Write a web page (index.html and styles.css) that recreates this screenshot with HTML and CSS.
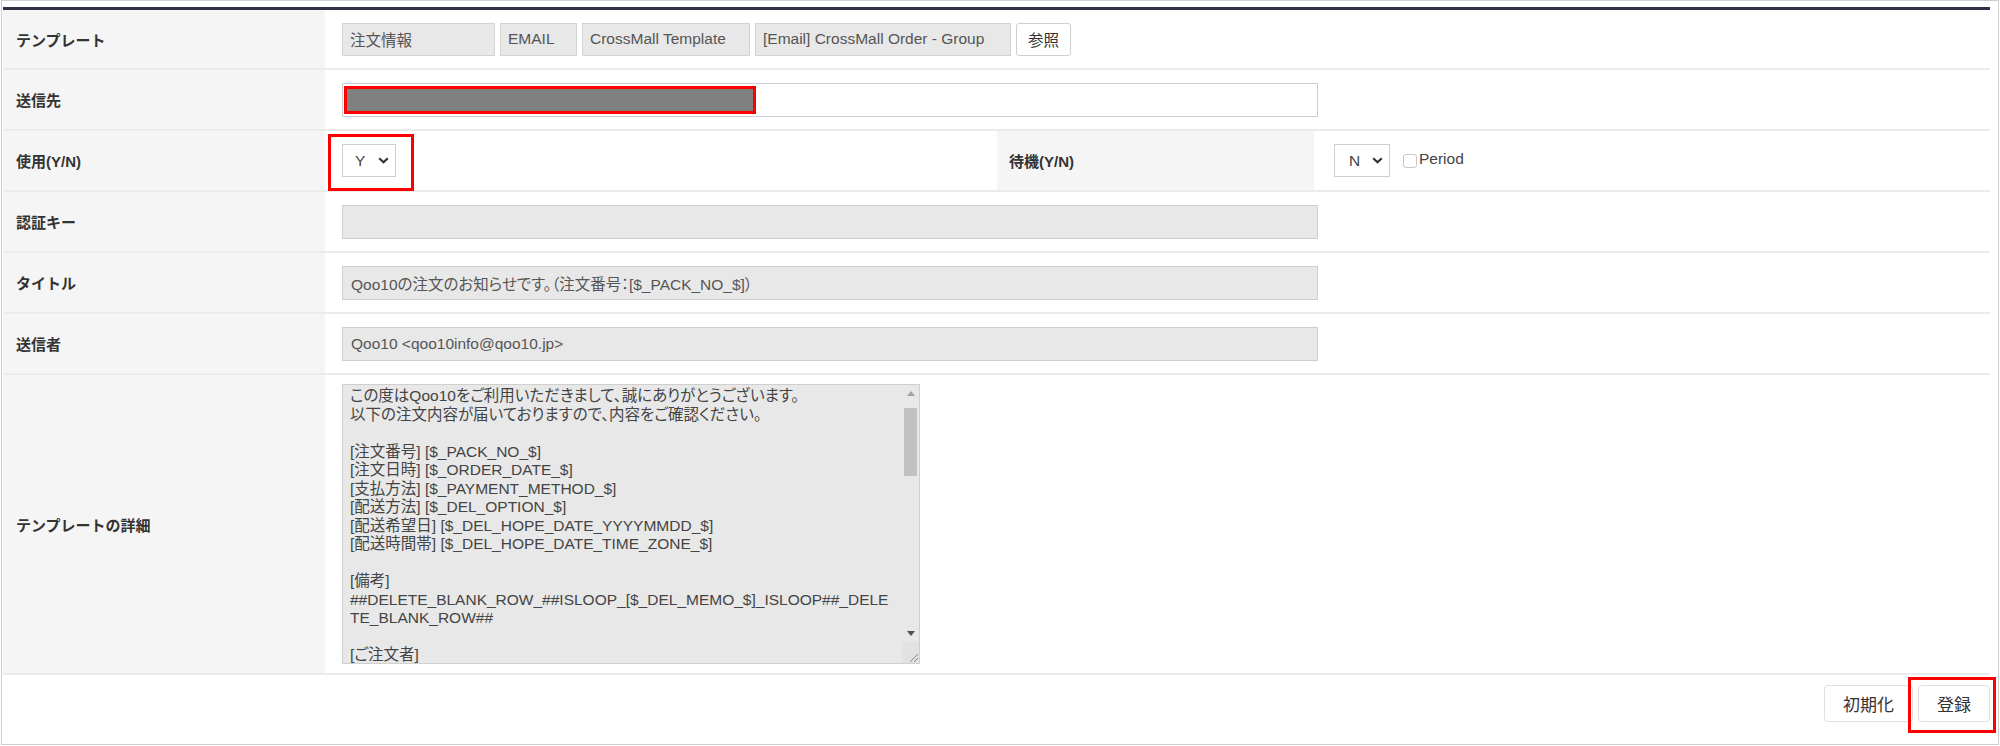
FILE: index.html
```html
<!DOCTYPE html>
<html lang="ja">
<head>
    <meta charset="UTF-8">
    <meta name="viewport" content="width=device-width, initial-scale=1.0">
    <title>テンプレート設定</title>
    <link rel="stylesheet" href="styles.css">
</head>
<body>
    <div class="panel">
        <div class="form">
            <div class="cell label row-first">テンプレート</div>
            <div class="cell value span3 row-first">
                <span class="chip chip-type">注文情報</span>
                <span class="chip chip-kind">EMAIL</span>
                <span class="chip chip-group">CrossMall Template</span>
                <span class="chip chip-name">[Email] CrossMall Order - Group</span>
                <button class="btn-ref" type="button">参照</button>
            </div>

            <div class="cell label">送信先</div>
            <div class="cell value span3">
                <div class="field field-white">
                    <span class="redacted"></span>
                </div>
            </div>

            <div class="cell label">使用(Y/N)</div>
            <div class="cell value">
                <div class="select marked">
                    <span class="select-text">Y</span>
                    <svg class="chev" width="11" height="7" viewBox="0 0 11 7"><polyline points="1.2,1.2 5.5,5.3 9.8,1.2" fill="none" stroke="#333" stroke-width="2.2"/></svg>
                </div>
            </div>
            <div class="cell label label-mid">待機(Y/N)</div>
            <div class="cell value value-last">
                <div class="select select-n">
                    <span class="select-text">N</span>
                    <svg class="chev" width="11" height="7" viewBox="0 0 11 7"><polyline points="1.2,1.2 5.5,5.3 9.8,1.2" fill="none" stroke="#333" stroke-width="2.2"/></svg>
                </div>
                <span class="chk"></span>
                <span class="chk-label">Period</span>
            </div>

            <div class="cell label">認証キー</div>
            <div class="cell value span3">
                <div class="field"></div>
            </div>

            <div class="cell label">タイトル</div>
            <div class="cell value span3">
                <div class="field">Qoo10の注文のお知らせです。（注文番号：[$_PACK_NO_$]）</div>
            </div>

            <div class="cell label">送信者</div>
            <div class="cell value span3">
                <div class="field">Qoo10 &lt;qoo10info@qoo10.jp&gt;</div>
            </div>

            <div class="cell label row-memo">テンプレートの詳細</div>
            <div class="cell value span3 row-memo">
                <div class="memo">
                    <textarea class="memo-text" readonly>この度はQoo10をご利用いただきまして、誠にありがとうございます。
以下の注文内容が届いておりますので、内容をご確認ください。

[注文番号] [$_PACK_NO_$]
[注文日時] [$_ORDER_DATE_$]
[支払方法] [$_PAYMENT_METHOD_$]
[配送方法] [$_DEL_OPTION_$]
[配送希望日] [$_DEL_HOPE_DATE_YYYYMMDD_$]
[配送時間帯] [$_DEL_HOPE_DATE_TIME_ZONE_$]

[備考]
##DELETE_BLANK_ROW_##ISLOOP_[$_DEL_MEMO_$]_ISLOOP##_DELETE_BLANK_ROW##

[ご注文者]</textarea>
                    <div class="vscroll">
                        <span class="vs-btn"><svg width="8" height="5" viewBox="0 0 8 5"><polygon points="0,5 8,5 4,0" fill="#a3a3a3"/></svg></span>
                        <span class="vs-thumb"></span>
                        <span class="vs-track"></span>
                        <span class="vs-btn"><svg width="8" height="5" viewBox="0 0 8 5"><polygon points="0,0 8,0 4,5" fill="#505050"/></svg></span>
                        <span class="vs-corner"><svg width="11" height="11" viewBox="0 0 11 11"><line x1="10" y1="2" x2="2" y2="10" stroke="#8a8a8a" stroke-width="1"/><line x1="10" y1="6" x2="6" y2="10" stroke="#8a8a8a" stroke-width="1"/></svg></span>
                    </div>
                </div>
            </div>
        </div>

        <div class="actions">
            <button class="btn" type="button">初期化</button>
            <button class="btn marked-btn" type="button">登録</button>
        </div>
    </div>
</body>
</html>
```

FILE: styles.css
```css
body {
    margin: 0;
    background: #fff;
    font-family: "Liberation Sans", "Noto Sans CJK JP", sans-serif;
    font-size: 15.5px;
    color: #555;
}

.panel {
    margin: 0 1px;
    height: 745px;
    box-sizing: border-box;
    border: 1px solid #cfcfcf;
    padding: 6px 8px 0 1px;
}

.form {
    display: grid;
    grid-template-columns: 322px 672px 317px 1fr;
    border-top: 3px solid #2f3244;
}

.cell {
    display: flex;
    align-items: center;
    height: 61px;
    box-sizing: border-box;
    border-bottom: 2px solid #ebebeb;
}

.cell.row-first {
    height: 60px;
}

.cell.row-memo {
    height: 300px;
}

.span3 {
    grid-column: span 3;
}

.label {
    background: #f5f5f5;
    padding-left: 13px;
    font-size: 15px;
    font-weight: bold;
    color: #333;
}

.label-mid {
    padding-left: 12px;
}

.value {
    padding-left: 17px;
    font-feature-settings: "palt" 1;
}

.value-last {
    padding-left: 20px;
}

/* template chips */
.chip {
    display: inline-flex;
    align-items: center;
    height: 33px;
    box-sizing: border-box;
    margin-right: 5px;
    padding: 0 7px;
    background: #e8e8e8;
    border: 1px solid #d3d3d3;
    color: #555;
    white-space: nowrap;
}

.chip-type { width: 153px; }
.chip-kind { width: 77px; }
.chip-group { width: 168px; }
.chip-name { width: 256px; }

.btn-ref {
    height: 33px;
    width: 55px;
    padding: 0;
    background: #fff;
    border: 1px solid #cfcfcf;
    border-radius: 3px;
    font: inherit;
    color: #333;
}

/* text fields */
.field {
    display: flex;
    align-items: center;
    width: 976px;
    height: 34px;
    box-sizing: border-box;
    padding: 0 8px;
    background: #e8e8e8;
    border: 1px solid #cfcfcf;
    color: #555;
}

.field-white {
    background: #fff;
    padding: 2px 1px;
    align-items: stretch;
}

.redacted {
    width: 412px;
    box-sizing: border-box;
    background: #808080;
    border: 3px solid #ff0000;
}

/* selects */
.select {
    position: relative;
    display: flex;
    align-items: center;
    width: 54px;
    height: 33px;
    box-sizing: border-box;
    padding-left: 12px;
    background: #fff;
    border: 1px solid #cfcfcf;
    color: #444;
}

.select-n {
    width: 56px;
    padding-left: 14px;
}

.select-text {
    width: 23px;
}

.marked::after {
    content: "";
    position: absolute;
    top: -11px;
    right: -19px;
    bottom: -15px;
    left: -15px;
    border: 3px solid #ff0000;
}

.chk {
    width: 14px;
    height: 14px;
    box-sizing: border-box;
    margin-left: 13px;
    border: 1px solid #c8c8c8;
    border-radius: 3px;
    background: #fff;
}

.chk-label {
    margin-left: 2px;
    margin-bottom: 4px;
    color: #444;
}

/* template body */
.memo {
    display: flex;
    width: 578px;
    height: 280px;
    box-sizing: border-box;
    border: 1px solid #cfcfcf;
    background: #e8e8e8;
}

.memo-text {
    flex: 1;
    margin: 0;
    padding: 2px 9px 0 7px;
    border: 0;
    outline: none;
    background: transparent;
    resize: none;
    overflow: hidden;
    font: inherit;
    font-feature-settings: "palt" 1;
    line-height: 18.5px;
    color: #444;
}

.vscroll {
    display: flex;
    flex-direction: column;
    width: 17px;
}

.vs-btn {
    display: flex;
    align-items: center;
    justify-content: center;
    height: 17px;
}

.vs-thumb {
    height: 68px;
    margin: 6px 2px 0;
    background: #c1c1c1;
}

.vs-track {
    flex: 1;
}

.vs-corner {
    display: flex;
    align-items: flex-end;
    justify-content: flex-end;
    height: 21px;
    background: #e2e2e2;
}

/* footer buttons */
.actions {
    display: flex;
    justify-content: flex-end;
    gap: 5px;
    padding-top: 10px;
}

.btn {
    position: relative;
    height: 37px;
    padding: 0 18px;
    background: #fff;
    border: 1px solid #e0e0e0;
    border-radius: 4px;
    font-family: "Noto Sans CJK JP", sans-serif;
    font-size: 17px;
    color: #333;
}

.marked-btn::after {
    content: "";
    position: absolute;
    top: -9px;
    right: -7px;
    bottom: -12px;
    left: -11px;
    border: 3px solid #ff0000;
}
```
